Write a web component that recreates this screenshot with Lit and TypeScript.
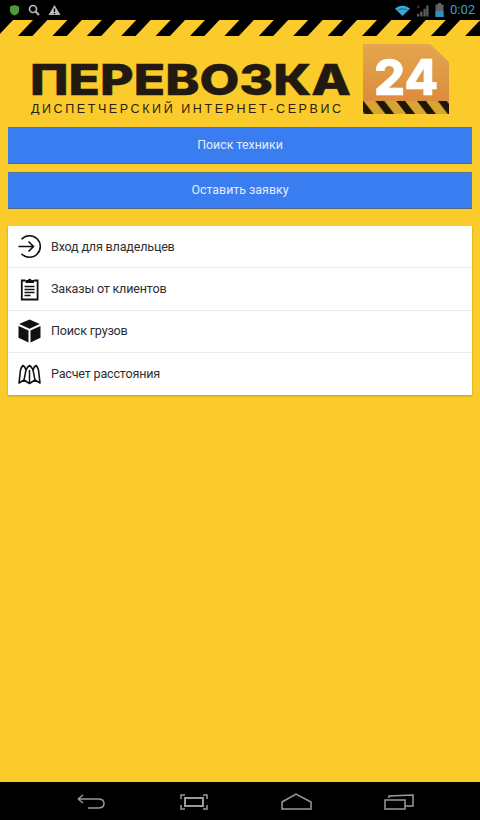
import { LitElement, html, css, svg } from 'lit';
import { customElement } from 'lit/decorators.js';

const menu = [
  {
    label: 'Вход для владельцев',
    icon: svg`<path d="M3.500 5.250A10.800 10.800 0 1 1 3.500 19.750" fill="none" stroke="#111" stroke-width="1.600"/>
      <path d="M.5 12.500h15M10.500 7.500l5 5-5 5" fill="none" stroke="#111" stroke-width="1.600"/>`,
  },
  {
    label: 'Заказы от клиентов',
    icon: svg`<path d="M7.500 4.500H3.800v19h15.800v-19H16" fill="none" stroke="#111" stroke-width="1.800"/>
      <path d="M7.500 7V4h2.400a1.900 1.900 0 0 1 3.600 0H16v3z" fill="#111"/>
      <path d="M6.500 10.500h10M6.500 13.500h10M6.500 16.500h10M6.500 19.500h6" stroke="#111" stroke-width="1.400"/>`,
  },
  {
    label: 'Поиск грузов',
    icon: svg`<path d="M11.500 1.500 21.800 6 11.500 10.800 1.200 6z" fill="#111"/>
      <path d="M.5 8l10 4.600v12L.5 19.800zM22.500 8l-10 4.600v12l10-4.800z" fill="#111"/>`,
  },
  {
    label: 'Расчет расстояния',
    icon: svg`<path d="M1 22 2.500 9Q3.500 5.500 5 4.500 7 5.500 8 9 9.500 5.500 11.500 4.500 13.500 5.500 15 9 16 5.500 18 4.500 19.500 5.500 20.500 9L22 22l-5-3-5.500 3.500L6 19z" fill="none" stroke="#111" stroke-width="1.600" stroke-linejoin="round"/>
      <path d="M8 9 6 19M11.500 9v13M15 9l2 10" stroke="#111" stroke-width="1.500" fill="none"/>`,
  },
];

const hazard = Array.from({ length: 15 }, (_, i) => i * 34.4);

@customElement('app-root')
export class AppRoot extends LitElement {
  static styles = css`
    :host {
      display: flex;
      flex-direction: column;
      height: 820px;
      overflow: hidden;
      background: #facb2a;
      font-family: 'Roboto', sans-serif;
    }
    .status {
      height: 20px;
      flex: none;
      background: #000;
      display: flex;
      align-items: center;
      padding: 0 5px 0 9px;
    }
    .status svg {
      display: block;
      flex: none;
    }
    .status .left {
      display: flex;
      align-items: center;
      gap: 8px;
    }
    .status .right {
      margin-left: auto;
      display: flex;
      align-items: center;
      gap: 6px;
    }
    .clock {
      color: #3a9ec8;
      font-size: 13px;
      line-height: 20px;
    }
    .stripes {
      display: block;
      flex: none;
    }
    .logo {
      display: block;
      flex: none;
      margin-top: 6px;
    }
    .main {
      padding: 12px 8px 0;
      flex: 1;
      display: flex;
      flex-direction: column;
    }
    .btn {
      height: 33px;
      padding-bottom: 2px;
      background: #3a7df0;
      border-top: 1px solid #55738a;
      border-bottom: 1px solid #50697c;
      display: flex;
      align-items: center;
      justify-content: center;
      color: #e3ecfb;
      font-size: 12.400px;
      box-sizing: content-box;
    }
    .btn + .btn {
      margin-top: 8px;
    }
    .card {
      margin-top: 17px;
      background: #fff;
      box-shadow: 0 1px 2px rgba(120, 90, 0, 0.4);
    }
    .row {
      height: 42.250px;
      box-sizing: border-box;
      display: flex;
      align-items: center;
      gap: 9px;
      padding-left: 10px;
      color: #2f2f2f;
      font-size: 12.600px;
      letter-spacing: -0.2px;
      border-bottom: 1px solid #ececec;
    }
    .row span {
      padding-bottom: 1px;
    }
    .row:last-child {
      border-bottom: none;
    }
    .row svg {
      display: block;
      flex: none;
      width: 24px;
      height: 26px;
    }
    .nav {
      height: 38px;
      flex: none;
      background: #000;
      display: flex;
      align-items: center;
    }
    .nav svg {
      display: block;
    }
  `;

  render() {
    return html`
      <div class="status">
        <div class="left">
          <svg width="11" height="12" viewBox="0 0 11 12"><path d="M5.500 1 10 2.500V7c0 2-2 3.500-4.500 4.500C3 10.500 1 9 1 7V2.500z" fill="#4c9a3a"/></svg>
          <svg width="12" height="12" viewBox="0 0 12 12"><circle cx="5" cy="5" r="3.500" fill="none" stroke="#b9b9b9" stroke-width="1.700"/><path d="m7.500 7.500 3.500 3.500" stroke="#b9b9b9" stroke-width="2"/></svg>
          <svg width="13" height="12" viewBox="0 0 13 12"><path d="M6.500 1 12.500 11H.5z" fill="#b9b9b9"/><path d="M6.500 4.500v3.500M6.500 9v1.200" stroke="#000" stroke-width="1.300"/></svg>
        </div>
        <div class="right">
          <svg width="15" height="11" viewBox="0 0 18 13"><path d="M0 4.500C5 -.5 13 -.5 18 4.500L9 13z" fill="#35a9dc"/><path d="M3 6.800C6.500 3.800 11.500 3.800 15 6.800" stroke="#0a3a50" stroke-width=".8" fill="none"/></svg>
          <svg width="13" height="13" viewBox="0 0 14 13"><path d="M1 10h2.500v3H1zM4.500 7.500H7V13H4.500zM8 4.500h2.500V13H8zM11 1h2.500v12H11z" fill="#5d5d5d"/><path d="m1 1 3 3M4 1 1 4" stroke="#8e2230" stroke-width="1"/></svg>
          <svg width="9" height="14" viewBox="0 0 9 14"><path d="M3 0h3v1.500h2.500V14H.5V1.500H3z" fill="#5f6468"/><path d="M.5 8h8v6h-8z" fill="#2f8fc4"/></svg>
          <span class="clock">0:02</span>
        </div>
      </div>
      <svg class="stripes" width="480" height="16" viewBox="0 0 480 16">
        <rect width="480" height="16" fill="#000"/>
        ${hazard.map(
          (x) => svg`<path d="M${13 + x} 0h20L${18 + x} 16H${x - 2}z" fill="#facb2a"/>`
        )}
      </svg>
      <svg class="logo" width="480" height="73" viewBox="0 0 480 73">
        <defs>
          <linearGradient id="box" x1="0" y1="0" x2="0" y2="1">
            <stop offset="0" stop-color="#e4a64e"/>
            <stop offset="1" stop-color="#dc8c3f"/>
          </linearGradient>
          <pattern id="mini" width="20.800" height="13" patternUnits="userSpaceOnUse" x="1" y="59">
            <rect width="20.800" height="13" fill="#d9a532"/>
            <path d="M0 0h9l10 13H10z" fill="#1d1609"/>
          </pattern>
        </defs>
        <text x="30" y="52.500" textLength="321" lengthAdjust="spacingAndGlyphs" font-family="'Inter', sans-serif" font-weight="800" font-size="43" fill="#221a10" stroke="#221a10" stroke-width=".5">ПЕРЕВОЗКА</text>
        <text x="31" y="70.500" textLength="310" font-family="'Liberation Sans', sans-serif" font-size="12.500" fill="#2b2110">ДИСПЕТЧЕРСКИЙ ИНТЕРНЕТ-СЕРВИС</text>
        <path d="M363 2h67l19 18v39h-86z" fill="url(#box)"/>
        <rect x="363" y="59" width="86" height="13" fill="url(#mini)"/>
        <text x="374" y="53" textLength="64" lengthAdjust="spacingAndGlyphs" font-family="'Inter', sans-serif" font-weight="800" font-size="50" fill="#fff" stroke="#fff" stroke-width=".6">24</text>
      </svg>
      <div class="main">
        <div class="btn">Поиск техники</div>
        <div class="btn">Оставить заявку</div>
        <div class="card">
          ${menu.map(
            (item) => html`
              <div class="row">
                <svg viewBox="0 0 24 26">${item.icon}</svg>
                <span>${item.label}</span>
              </div>
            `
          )}
        </div>
      </div>
      <div class="nav">
        <svg width="480" height="20" viewBox="0 0 480 20" fill="none" stroke="#9a9a9a" stroke-width="1.500">
          <path d="M78 8H98c4 0 6 2 6 4.500S102 17 98 17H88M78 8l5-4M78 8l5 4"/>
          <path d="M185 7h18v8h-18z" stroke-width="2"/>
          <path d="M181 8V4h4M207 8V4h-4M181 14v4h4M207 14v4h-4"/>
          <path d="M282 11l14-8 15 8v7h-29z"/>
          <path d="M385 9h20v9h-20zM389 7V5l24-1v11h-8"/>
        </svg>
      </div>
    `;
  }
}
